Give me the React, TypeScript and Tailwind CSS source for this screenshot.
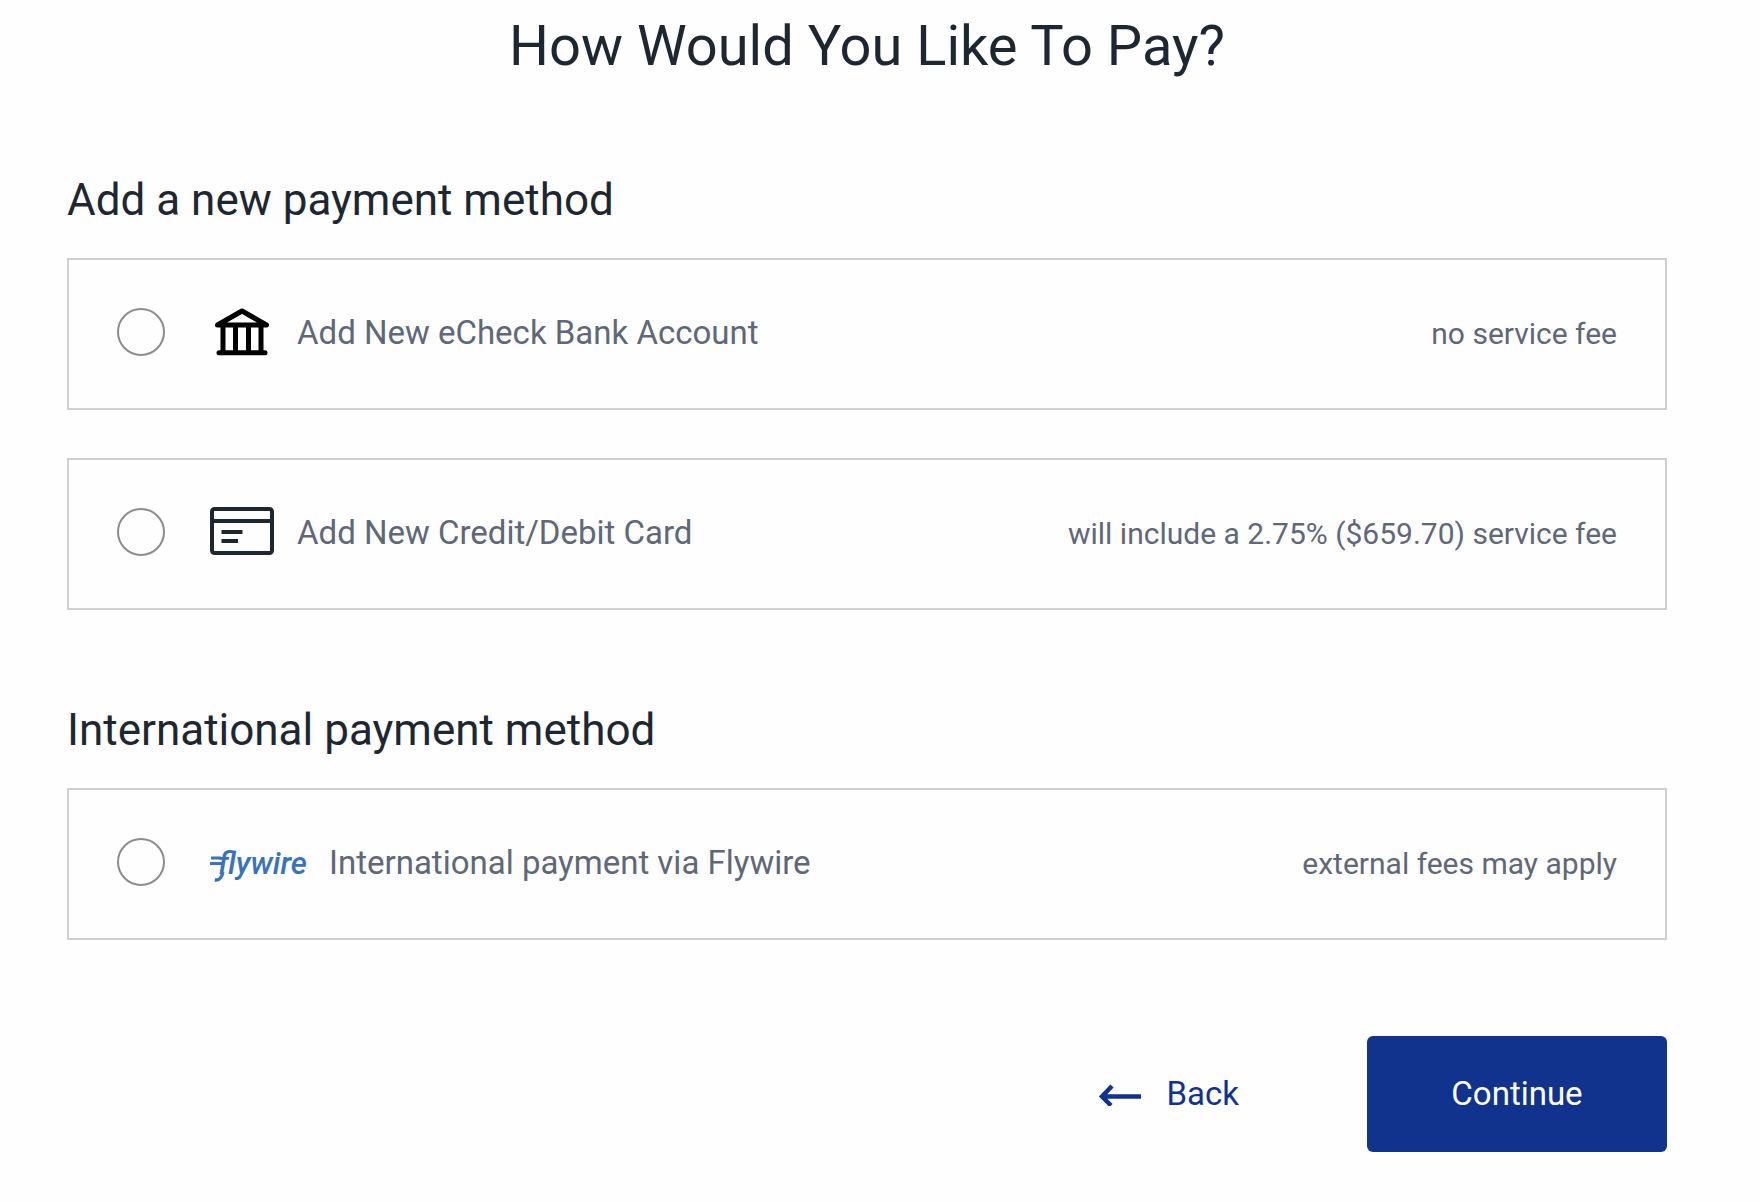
import type { ReactNode } from 'react'

function BankIcon() {
  return (
    <svg className="h-12 w-16" viewBox="0 0 64 48" fill="none" stroke="#000">
      <path
        d="M7.500 17 32 3 56.500 17Z"
        strokeWidth="5"
        strokeLinejoin="round"
      />
      <path d="M13 17v27M25.500 17v27M38.500 17v27M51 17v27" strokeWidth="5" />
      <path d="M9 44.700h46" strokeWidth="5" strokeLinecap="round" />
    </svg>
  )
}

function CardIcon() {
  return (
    <svg
      className="h-12 w-16 overflow-visible"
      viewBox="0 0 64 48"
      fill="none"
      stroke="#1d2731"
      strokeWidth="4"
    >
      <rect x="2" y="1" width="60" height="44" rx="2.500" />
      <path d="M2 13h60M11.500 24h21M11.500 33h16.500" />
    </svg>
  )
}

function FlywireLogo() {
  return (
    <span className="relative block h-12 w-24 pt-0.5 pl-2 text-[31px] leading-12 font-medium text-[#3a73b9] italic">
      flywire
      <svg
        className="absolute top-0 left-0 h-12 w-24"
        viewBox="0 0 96 48"
        fill="none"
        stroke="#3a73b9"
        strokeWidth="3"
      >
        <path d="M1 20h10M0 25.500h13" />
        <path d="M12.800 34c-1 6-3 8.500-8 8" strokeWidth="3.500" />
      </svg>
    </span>
  )
}

function PaymentOption({
  id,
  icon,
  label,
  fee,
}: {
  id: string
  icon: ReactNode
  label: string
  fee: string
}) {
  return (
    <label
      htmlFor={id}
      className="flex cursor-pointer items-center border-2 border-[#cfcfcf] px-12 pt-12 pb-[50px] text-[#5f6878]"
    >
      <input
        id={id}
        type="radio"
        name="payment-method"
        className="mb-0.5 size-12 shrink-0 appearance-none rounded-full border-2 border-[#8b8c90] checked:border-[14px] checked:border-[#12338d]"
      />
      <span className="mb-0.5 ml-[45px] shrink-0">{icon}</span>
      <span className="ml-[23px] text-[33px] leading-10">{label}</span>
      <span className="mt-0.5 ml-auto text-[30px] leading-10">{fee}</span>
    </label>
  )
}

function Section({ title, children }: { title: string; children: ReactNode }) {
  return (
    <section>
      <h2 className="mb-[34px] text-[44px] leading-12">{title}</h2>
      <div className="space-y-12">{children}</div>
    </section>
  )
}

function App() {
  return (
    <main className="min-h-screen bg-[#fefefe] pt-[14px] pr-[93px] pb-12 pl-[67px] font-['Roboto',sans-serif] text-[#1d2731]">
      <h1 className="text-center text-[56px] leading-16">
        How Would You Like To Pay?
      </h1>
      <form className="mt-[98px] space-y-24">
        <Section title="Add a new payment method">
          <PaymentOption
            id="echeck"
            icon={<BankIcon />}
            label="Add New eCheck Bank Account"
            fee="no service fee"
          />
          <PaymentOption
            id="card"
            icon={<CardIcon />}
            label="Add New Credit/Debit Card"
            fee="will include a 2.75% ($659.70) service fee"
          />
        </Section>
        <Section title="International payment method">
          <PaymentOption
            id="flywire"
            icon={<FlywireLogo />}
            label="International payment via Flywire"
            fee="external fees may apply"
          />
        </Section>
        <div className="flex items-center justify-end gap-32 text-[33px] leading-10">
          <button type="button" className="flex items-center gap-6 text-[#12338d]">
            <svg
              className="h-6 w-11"
              viewBox="0 0 44 24"
              fill="none"
              stroke="currentColor"
              strokeWidth="4.500"
            >
              <path d="M4 14.500h39M14 4 4 14.500l9 9" />
            </svg>
            Back
          </button>
          <button
            type="button"
            className="h-[116px] w-[300px] rounded-md bg-[#12338d] text-white"
          >
            Continue
          </button>
        </div>
      </form>
    </main>
  )
}

export default App
